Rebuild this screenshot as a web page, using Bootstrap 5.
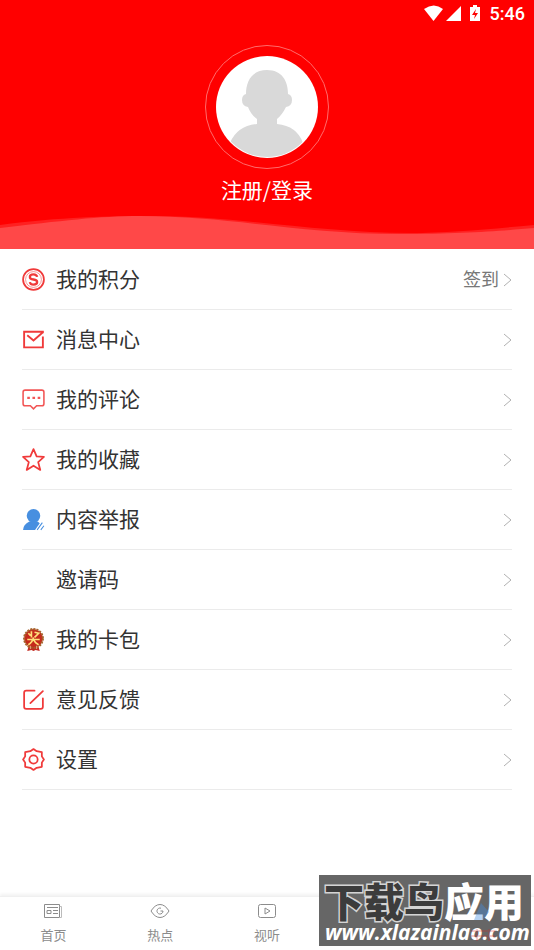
<!DOCTYPE html>
<html lang="zh-CN">
<head>
<meta charset="utf-8">
<meta name="viewport" content="width=device-width, initial-scale=1">
<title>我的</title>
<link href="https://cdn.jsdelivr.net/npm/bootstrap@5.3.0/dist/css/bootstrap.min.css" rel="stylesheet">
<style>
body{font-family:Roboto,"Noto Sans CJK SC",sans-serif;color:#333}
.hero{background:#f00}
.status{height:27px;font-size:18px;font-weight:500;padding-right:9px}
.ring{width:124px;height:124px;border:1px solid #ff6b6b;margin-top:18px}
.face{width:102px;height:102px}
.login{font-family:"Noto Sans CJK SC",sans-serif;font-size:21px;line-height:30px;margin-top:5px}
.wave{height:34px;margin-top:11px}
.entry{height:60px;border-bottom:1px solid #ebebeb;color:#333;font-family:"Noto Sans CJK SC",sans-serif;font-size:21px;line-height:30px}
.entry span{padding-bottom:4px}
.menu{padding:0 22px;margin-top:1px}
.ico{width:23px;height:25px;margin-right:11px;flex:none}
.entry .sign{font-size:18px;color:#777}
.tabs{height:54px;border-top:1px solid #f0f0f0;box-shadow:0 -2px 3px #f2f2f2}
.tab{color:#8c8c8c;font-family:"Noto Sans CJK SC",sans-serif;font-size:13px;line-height:20px;padding-top:5px}
.tab:hover{color:#f00}
.tab svg{width:20px;height:18px;margin-bottom:5px}
.stamp{position:absolute;right:3px;bottom:4px;width:212px;height:71px;background:#666;white-space:nowrap;padding-top:7px}
.stamp-name{font-family:"Noto Sans CJK SC",sans-serif;font-weight:900;font-size:40px;line-height:36px;padding-left:5px;color:#fff}
.stamp-dark{color:#3c3c3c;-webkit-text-stroke:3px #d4d4d4;paint-order:stroke fill}
.stamp-url{font-family:"Open Sans",sans-serif;font-weight:700;font-style:italic;font-size:21px;line-height:28px;padding-left:6px;color:#fff}
.glow{position:absolute;left:150px;top:25px;width:28px;height:44px}
</style>
<script src="https://cdn.jsdelivr.net/npm/bootstrap@5.3.0/dist/js/bootstrap.bundle.min.js"></script>
</head>
<body class="d-flex flex-column min-vh-100 bg-white position-relative">
<header class="hero text-white d-flex flex-column align-items-center">
  <div class="status w-100 d-flex justify-content-end align-items-center">
    <svg width="58" height="18" viewBox="0 0 58 18" fill="#fff" aria-hidden="true"><path d="M0 4Q10-3 19 4L9.500 16Z"/><path d="M37 1V16H22Z"/><path d="M46 2h3V0h4v2h3v14H46Z"/><path d="M52 4l-4 6h3l-1 4 4-6h-3Z" fill="#f00"/></svg>
    <span class="ps-2">5:46</span>
  </div>
  <div class="ring rounded-circle d-flex align-items-center justify-content-center">
    <svg class="face" viewBox="0 0 102 102" role="img" aria-label="头像"><defs><clipPath id="c"><circle cx="51" cy="51" r="50"/></clipPath></defs><circle cx="51" cy="51" r="51" fill="#fff"/><path clip-path="url(#c)" fill="#d9d9d9" d="M51 14C66 14 72 25 72 38Q76 39 76 44Q76 50 70 51Q66 59 61 63V68Q81 70 87 87V102H14V87Q21 70 41 68V63Q35 59 32 51Q26 50 26 44Q26 39 30 38C30 25 36 14 51 14Z"/></svg>
  </div>
  <a href="#" class="login text-white text-decoration-none">注册/登录</a>
  <svg class="wave w-100 d-block" viewBox="0 0 534 34" preserveAspectRatio="none" aria-hidden="true"><path fill="#ff2020" d="M0 10C60 2 110 1 150 1C240 1 320 18 410 18C450 18 490 14 534 10V34H0Z"/><path fill="#ff4848" d="M0 13C60 6 100 1 140 1C230 1 300 19 400 19C460 19 500 16 534 13V34H0Z"/></svg>
</header>
<main class="menu flex-grow-1">
  <a href="#" class="entry d-flex align-items-center text-decoration-none"><svg class="ico" viewBox="0 0 22 24" fill="none" stroke="#f03a3a" stroke-width="1.700"><circle cx="11" cy="12" r="10"/><circle cx="11" cy="12" r="7.600" stroke-width=".5"/><path stroke-width="2.200" d="M14.500 9.500Q14 7 11 7Q7.500 7 7.500 9.500Q7.500 11.500 11 12Q14.500 12.500 14.500 14.500Q14.500 17 11 17Q8 17 7.500 14.500"/></svg><span>我的积分</span><span class="sign ms-auto me-1">签到</span><svg width="9" height="14" viewBox="0 0 9 14" fill="none" stroke="#b0b0b0"><path d="M1 1l7 6-7 6"/></svg></a>
  <a href="#" class="entry d-flex align-items-center text-decoration-none"><svg class="ico" viewBox="0 0 22 24" fill="none" stroke="#f03a3a" stroke-width="1.800"><path d="M20 6V4.500H2V19.500H20V9M5 8l6 5 9-8"/></svg><span>消息中心</span><svg class="ms-auto" width="9" height="14" viewBox="0 0 9 14" fill="none" stroke="#b0b0b0"><path d="M1 1l7 6-7 6"/></svg></a>
  <a href="#" class="entry d-flex align-items-center text-decoration-none"><svg class="ico" viewBox="0 0 22 24" fill="none" stroke="#f25555" stroke-width="1.500"><path d="M3 3H19Q21 3 21 5V16Q21 18 19 18H14L11 21 8 18H3Q1 18 1 16V5Q1 3 3 3Z"/><path stroke-width="2.200" d="M5 10.500h2.500M10 10.500h2.500M15 10.500h2.500"/></svg><span>我的评论</span><svg class="ms-auto" width="9" height="14" viewBox="0 0 9 14" fill="none" stroke="#b0b0b0"><path d="M1 1l7 6-7 6"/></svg></a>
  <a href="#" class="entry d-flex align-items-center text-decoration-none"><svg class="ico" viewBox="0 0 22 24" fill="none" stroke="#f03a3a" stroke-width="1.700" stroke-linejoin="round"><path d="M11 2l3 7 7 .5-5.500 5 2 7.500-6.500-4-6.500 4 2-7.500L1 9.500 8 9Z"/></svg><span>我的收藏</span><svg class="ms-auto" width="9" height="14" viewBox="0 0 9 14" fill="none" stroke="#b0b0b0"><path d="M1 1l7 6-7 6"/></svg></a>
  <a href="#" class="entry d-flex align-items-center text-decoration-none"><svg class="ico" viewBox="0 0 22 24" fill="#478fe0"><circle cx="11" cy="8.500" r="6.500"/><path d="M7 14h8l2 1.500-4.500 6.500H1Q1 17 7 14Z"/><path d="M14.500 22l5-7M18 22l3-4" stroke="#478fe0"/></svg><span>内容举报</span><svg class="ms-auto" width="9" height="14" viewBox="0 0 9 14" fill="none" stroke="#b0b0b0"><path d="M1 1l7 6-7 6"/></svg></a>
  <a href="#" class="entry d-flex align-items-center text-decoration-none"><i class="ico"></i><span>邀请码</span><svg class="ms-auto" width="9" height="14" viewBox="0 0 9 14" fill="none" stroke="#b0b0b0"><path d="M1 1l7 6-7 6"/></svg></a>
  <a href="#" class="entry d-flex align-items-center text-decoration-none"><svg class="ico" viewBox="0 0 22 24"><path fill="#c22a20" d="M7 16L5 23l4-1 2 1 2-1 4 1-2-7Z"/><circle cx="11" cy="11" r="9" fill="#c52a1c" stroke="#a5652c" stroke-width="2" stroke-dasharray="2 1"/><path d="M6 6l2 2M9 4v6M12 5l4 1-4 4M5 12h12M11 10Q10 15 6 17M11 12q2 4 5 5" stroke="#ffe07a" stroke-width="1.600" fill="none"/><path d="M8 18v3M14 18v3" stroke="#e8a080"/></svg><span>我的卡包</span><svg class="ms-auto" width="9" height="14" viewBox="0 0 9 14" fill="none" stroke="#b0b0b0"><path d="M1 1l7 6-7 6"/></svg></a>
  <a href="#" class="entry d-flex align-items-center text-decoration-none"><svg class="ico" viewBox="0 0 22 24" fill="none" stroke="#f03a3a" stroke-width="1.700" stroke-linecap="round"><path d="M12 3.500H4Q2 3.500 2 5.500V19Q2 21 4 21H18Q20 21 20 19V11M8 15.500L20 4"/></svg><span>意见反馈</span><svg class="ms-auto" width="9" height="14" viewBox="0 0 9 14" fill="none" stroke="#b0b0b0"><path d="M1 1l7 6-7 6"/></svg></a>
  <a href="#" class="entry d-flex align-items-center text-decoration-none"><svg class="ico" viewBox="0 0 22 24" fill="none" stroke="#f03a3a" stroke-width="1.700" stroke-linejoin="round"><path d="M11 2l3 2 5 1 0 4 2 3-2 3 0 4-5 1-3 2-3-2-5-1 0-4-2-3 2-3 0-4 5-1Z"/><circle cx="11" cy="12" r="4"/></svg><span>设置</span><svg class="ms-auto" width="9" height="14" viewBox="0 0 9 14" fill="none" stroke="#b0b0b0"><path d="M1 1l7 6-7 6"/></svg></a>
</main>
<nav class="tabs row g-0 row-cols-5 text-center bg-white">
  <a href="#" class="tab col d-flex flex-column align-items-center text-decoration-none"><svg viewBox="0 0 20 18" fill="none" stroke="#8c8c8c"><path d="M1.500 2.500h15v13h-15ZM4 5.500h11M4 8.500h4v3H4ZM10 8.500h5M10 11.500h5"/><path stroke="#bbb" d="M16.500 4.500h2v11h-2"/></svg>首页</a>
  <a href="#" class="tab col d-flex flex-column align-items-center text-decoration-none"><svg viewBox="0 0 20 18" fill="none" stroke="#8c8c8c"><path d="M1 9Q5 2.500 10 2.500T19 9Q15 15.500 10 15.500T1 9Z"/><path d="M11 6.200A3 3 0 1 0 13 9H10.500"/></svg>热点</a>
  <a href="#" class="tab col d-flex flex-column align-items-center text-decoration-none"><svg viewBox="0 0 20 18" fill="none" stroke="#8c8c8c"><rect x="1.500" y="2.500" width="17" height="13" rx="2"/><path d="M8 6l5 3-5 3Z"/></svg>视听</a>
</nav>
<aside class="stamp"><div class="stamp-name"><span class="stamp-dark">下载鸟</span>应用</div><div class="stamp-url">www.xlazainlao.com</div><svg class="glow" viewBox="0 0 28 44" aria-hidden="true"><path d="M12 3l8 9-6 8H5Z" fill="#478fe0" opacity=".4"/><path d="M2 31h24M2 36h24M8 29v12M20 29v12" stroke="#d22" stroke-width="2" opacity=".22"/></svg></aside>
</body>
</html>
